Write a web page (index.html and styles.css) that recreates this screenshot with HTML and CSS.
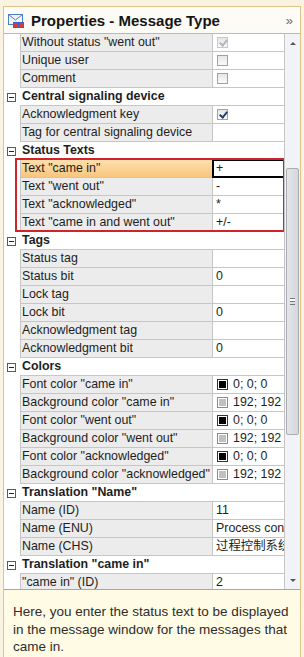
FILE: index.html
```html
<!DOCTYPE html>
<html lang="en">
  <head>
    <meta charset="UTF-8" />
    <meta name="viewport" content="width=device-width, initial-scale=1.0" />
    <title>Properties - Message Type</title>
    <link rel="stylesheet" href="styles.css">
  </head>
  <body>
    <div class="panel">
      <div class="titlebar">
        <svg class="title-icon" width="16" height="14" viewBox="0 0 16 14">
          <rect x="0.5" y="0.5" width="14" height="10" fill="#eef4fb" stroke="#4f7fc0"/>
          <path d="M0.5 0.5 L7.5 6 L14.5 0.5" fill="none" stroke="#4f7fc0"/>
          <rect x="5" y="8" width="11" height="6" fill="#3d63c4"/>
          <rect x="6" y="9" width="4" height="4" fill="#d83a3a"/>
          <rect x="11" y="9" width="4" height="4" fill="#d83a3a"/>
        </svg>
        <h1>Properties - Message Type</h1>
        <span class="more">&raquo;</span>
      </div>

      <div class="gridwrap">
        <div class="grid">
          <div class="row"><div class="gut"></div><div class="name">Without status "went out"</div><div class="val"><span class="chk dis on"></span></div></div>
          <div class="row"><div class="gut"></div><div class="name">Unique user</div><div class="val"><span class="chk"></span></div></div>
          <div class="row"><div class="gut"></div><div class="name">Comment</div><div class="val"><span class="chk"></span></div></div>

          <div class="cat"><div class="gut"><span class="exp"></span></div><div class="label">Central signaling device</div></div>
          <div class="row"><div class="gut"></div><div class="name">Acknowledgment key</div><div class="val"><span class="chk on"></span></div></div>
          <div class="row"><div class="gut"></div><div class="name">Tag for central signaling device</div><div class="val"></div></div>

          <div class="cat"><div class="gut"><span class="exp"></span></div><div class="label">Status Texts</div></div>
          <div class="hl">
            <div class="row sel"><div class="gut"></div><div class="name">Text "came in"</div><div class="val">+</div></div>
            <div class="row"><div class="gut"></div><div class="name">Text "went out"</div><div class="val">-</div></div>
            <div class="row"><div class="gut"></div><div class="name">Text "acknowledged"</div><div class="val">*</div></div>
            <div class="row"><div class="gut"></div><div class="name">Text "came in and went out"</div><div class="val">+/-</div></div>
          </div>

          <div class="cat"><div class="gut"><span class="exp"></span></div><div class="label">Tags</div></div>
          <div class="row"><div class="gut"></div><div class="name">Status tag</div><div class="val"></div></div>
          <div class="row"><div class="gut"></div><div class="name">Status bit</div><div class="val">0</div></div>
          <div class="row"><div class="gut"></div><div class="name">Lock tag</div><div class="val"></div></div>
          <div class="row"><div class="gut"></div><div class="name">Lock bit</div><div class="val">0</div></div>
          <div class="row"><div class="gut"></div><div class="name">Acknowledgment tag</div><div class="val"></div></div>
          <div class="row"><div class="gut"></div><div class="name">Acknowledgment bit</div><div class="val">0</div></div>

          <div class="cat"><div class="gut"><span class="exp"></span></div><div class="label">Colors</div></div>
          <div class="row"><div class="gut"></div><div class="name">Font color "came in"</div><div class="val"><span class="sw black"></span>0; 0; 0</div></div>
          <div class="row"><div class="gut"></div><div class="name">Background color "came in"</div><div class="val"><span class="sw grey"></span>192; 192</div></div>
          <div class="row"><div class="gut"></div><div class="name">Font color "went out"</div><div class="val"><span class="sw black"></span>0; 0; 0</div></div>
          <div class="row"><div class="gut"></div><div class="name">Background color "went out"</div><div class="val"><span class="sw grey"></span>192; 192</div></div>
          <div class="row"><div class="gut"></div><div class="name">Font color "acknowledged"</div><div class="val"><span class="sw black"></span>0; 0; 0</div></div>
          <div class="row"><div class="gut"></div><div class="name">Background color "acknowledged"</div><div class="val"><span class="sw grey"></span>192; 192</div></div>

          <div class="cat"><div class="gut"><span class="exp"></span></div><div class="label">Translation "Name"</div></div>
          <div class="row"><div class="gut"></div><div class="name">Name (ID)</div><div class="val">11</div></div>
          <div class="row"><div class="gut"></div><div class="name">Name (ENU)</div><div class="val">Process control</div></div>
          <div class="row"><div class="gut"></div><div class="name">Name (CHS)</div><div class="val">过程控制系统</div></div>

          <div class="cat"><div class="gut"><span class="exp"></span></div><div class="label">Translation "came in"</div></div>
          <div class="row"><div class="gut"></div><div class="name">"came in" (ID)</div><div class="val">2</div></div>
        </div>

        <div class="sbar">
          <div class="sbtn"><span class="arr up"></span></div>
          <div class="track">
            <div class="thumb"><span class="grip"></span></div>
          </div>
          <div class="sbtn"><span class="arr down"></span></div>
        </div>
      </div>

      <div class="desc">
        Here, you enter the status text to be displayed in the message window for the messages that came in.
      </div>
    </div>
  </body>
</html>
```

FILE: styles.css
```css
body {
  margin: 0;
  background: #fbf3e2;
  font-family: "Liberation Sans", Arial, sans-serif;
}
.panel {
  margin: 6px 3px 0 3px;
  height: 651px;
  border: 1px solid #e0c48e;
  border-bottom: none;
  background: #fff;
  display: flex;
  flex-direction: column;
  box-sizing: border-box;
}
.titlebar {
  height: 26px;
  display: flex;
  align-items: center;
  background: #fdfbf5;
  border-bottom: 1px solid #b9b9b9;
  padding-left: 4px;
}
.title-icon {
  margin-right: 7px;
  margin-top: 1px;
}
.titlebar h1 {
  margin: 1px 0 0 0;
  font-size: 15px;
  font-weight: bold;
  color: #151515;
  flex: 1;
}
.more {
  color: #6b6b6b;
  font-size: 13px;
  margin-right: 7px;
}

.gridwrap {
  height: 555px;
  display: flex;
  overflow: hidden;
}
.grid {
  width: 280px;
  overflow: hidden;
  font-size: 12.4px;
  color: #1e1e1e;
}
.row {
  display: grid;
  grid-template-columns: 16px 192px 72px;
  height: 18px;
}
.row .name,
.row .val {
  border-left: 1px solid #c6c6c6;
  border-bottom: 1px solid #c6c6c6;
  line-height: 17px;
  white-space: nowrap;
  overflow: hidden;
}
.row .name {
  background: #ececec;
  padding-left: 1px;
}
.row .val {
  background: #fff;
  padding-left: 3px;
  display: flex;
  align-items: center;
  font-family: "Liberation Sans", "Noto Sans CJK SC", sans-serif;
}
.row.sel .name {
  background: linear-gradient(#fde0ad, #f8c57e);
}
.row.sel .val {
  box-shadow: inset 0 0 0 1px #000;
  border-bottom-color: #000;
  border-left-color: #000;
}

.cat {
  display: grid;
  grid-template-columns: 16px 264px;
  height: 18px;
}
.cat .label {
  font-weight: bold;
  line-height: 17px;
  padding-left: 2px;
  border-bottom: 1px solid #c6c6c6;
  white-space: nowrap;
}
.gut {
  display: flex;
  align-items: center;
}
.exp {
  position: relative;
  width: 7px;
  height: 7px;
  margin-left: 3px;
  border: 1px solid #5a5a5a;
  background: #fff;
}
.exp:after {
  content: "";
  position: absolute;
  left: 1px;
  right: 1px;
  top: 3px;
  height: 1px;
  background: #222;
}

.hl {
  position: relative;
}
.hl:after {
  content: "";
  position: absolute;
  top: -2px;
  left: 11px;
  right: -1px;
  bottom: 0;
  border: 2px solid #d1232b;
  pointer-events: none;
}

.chk {
  position: relative;
  width: 9px;
  height: 9px;
  border: 1px solid #9aa3ad;
  background: linear-gradient(#e6e6e6, #fafafa);
  margin-left: 1px;
}
.chk.on:after {
  content: "";
  position: absolute;
  left: 3px;
  top: 0;
  width: 3px;
  height: 6px;
  border-right: 2px solid #27406b;
  border-bottom: 2px solid #27406b;
  transform: rotate(40deg);
}
.chk.dis {
  border-color: #c8c8c8;
}
.chk.dis.on:after {
  border-color: #b5b5b5;
}
.sw {
  width: 9px;
  height: 9px;
  border: 1px solid #333;
  margin: 0 5px 0 1px;
  flex: none;
}
.sw.black {
  background: #000;
  box-shadow: inset 0 0 0 1px #fff;
}
.sw.grey {
  background: #c0c0c0;
  border-color: #8a8a8a;
  box-shadow: inset 0 0 0 1px #fff;
}

.sbar {
  width: 15px;
  border-left: 1px solid #c6c6c6;
  background: #f2f3f6;
  display: flex;
  flex-direction: column;
}
.sbtn {
  height: 18px;
  display: flex;
  align-items: center;
  justify-content: center;
}
.arr {
  width: 0;
  height: 0;
  border-left: 3px solid transparent;
  border-right: 3px solid transparent;
}
.arr.up {
  border-bottom: 3px solid #555;
}
.arr.down {
  border-top: 3px solid #555;
}
.track {
  flex: 1;
  padding: 0 1px;
}
.thumb {
  margin-top: 116px;
  height: 265px;
  border: 1px solid #a9adb3;
  border-radius: 2px;
  background: linear-gradient(90deg, #e4e6e9, #d4d7db);
  display: flex;
  align-items: center;
  justify-content: center;
}
.grip {
  width: 5px;
  height: 5px;
  border-top: 1px solid #777;
  border-bottom: 1px solid #777;
  background: linear-gradient(#fff 2px, #777 2px, #777 3px, transparent 3px);
}

.desc {
  flex: 1;
  border-top: 1px solid #a6a6a6;
  background: #fffbe4;
  padding: 13px 9px 0 9px;
  font-size: 13.5px;
  line-height: 17.7px;
  color: #2d2d2d;
}
```
